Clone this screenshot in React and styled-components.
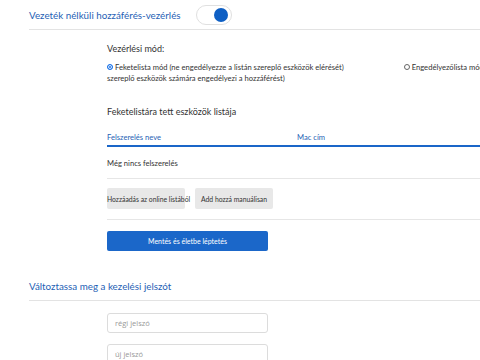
import React from 'react'
import styled, { createGlobalStyle } from 'styled-components'

const GlobalStyle = createGlobalStyle`
  body {
    margin: 0;
    background: #fff;
    overflow: hidden;
    font-family: Lato, "Noto Sans", sans-serif;
  }
`

const Page = styled.div`
  width: 640px;
  padding-left: 29px;
`

const SectionHead = styled.div`
  display: flex;
  align-items: center;
  gap: 15px;
  height: 29px;
  border-bottom: 1px solid #e3e3e3;
`

const Title = styled.h2`
  margin: 0;
  font-family: Lato, "Open Sans", sans-serif;
  font-size: 9.8px;
  font-weight: 400;
  color: #1f5fb5;
  letter-spacing: 0;
`

const Toggle = styled.div`
  position: relative;
  width: 34px;
  height: 18px;
  border: 1px solid #e0e0e0;
  border-radius: 10px;
  background: #fff;
  &::after {
    content: '';
    position: absolute;
    right: 3px;
    top: 2px;
    width: 14px;
    height: 14px;
    border-radius: 50%;
    background: #0e5fc4;
  }
`

const Body = styled.div`
  padding-left: 78px;
  padding-top: 13px;
`

const Label = styled.div`
  font-size: 9px;
  color: #333;
  line-height: 12px;
`

const Modes = styled.div`
  width: 440px;
  margin-top: 7px;
  font-size: 7.6px;
  line-height: 11px;
  color: #333;
`

const Radio = styled.span`
  display: inline-block;
  box-sizing: border-box;
  width: 6px;
  height: 6px;
  margin-right: 2px;
  border-radius: 50%;
  border: 1px solid ${p => (p.$on ? '#1a73e8' : '#666')};
  background: ${p => (p.$on ? '#1a73e8' : '#fff')};
  box-shadow: ${p => (p.$on ? 'inset 0 0 0 1px #fff' : 'none')};
  vertical-align: 0;
`

const Option = styled.span`
  margin-right: ${p => p.$gap || 0}px;
`

const ListTitle = styled(Label)`
  margin-top: 22px;
`

const TableHead = styled.div`
  display: grid;
  grid-template-columns: 190px 1fr;
  margin-top: 14px;
  padding-bottom: 2px;
  border-bottom: 2px solid #1a66c8;
  font-size: 7.6px;
  line-height: 11px;
  color: #1f5fb5;
`

const EmptyRow = styled.div`
  padding: 11px 0 9px;
  font-size: 7.6px;
  line-height: 11px;
  color: #333;
  border-bottom: 1px solid #e6e6e6;
`

const ButtonRow = styled.div`
  display: flex;
  gap: 10px;
  padding: 9px 0 10px;
  border-bottom: 1px solid #e6e6e6;
`

const GreyButton = styled.button`
  width: 78px;
  height: 21px;
  padding: 0;
  border: none;
  border-radius: 2px;
  background: #e8e8e8;
  font-family: inherit;
  font-size: 6.8px;
  color: #333;
  white-space: nowrap;
`

const PrimaryButton = styled.button`
  display: block;
  width: 161px;
  height: 20px;
  margin-top: 11px;
  border: none;
  border-radius: 2px;
  background: #1b67c9;
  color: #fff;
  font-family: inherit;
  font-size: 7px;
`

const SecondHead = styled(SectionHead)`
  margin-top: 20px;
`

const Fields = styled.div`
  display: flex;
  flex-direction: column;
  gap: 11px;
  padding: 12px 0 0 78px;
`

const Input = styled.input`
  box-sizing: border-box;
  width: 161px;
  height: 20px;
  padding: 0 7px;
  border: 1px solid #dcdcdc;
  border-radius: 3px;
  font-family: "Open Sans", sans-serif;
  font-size: 7.5px;
  color: #333;
  &::placeholder {
    color: #999;
  }
`

export default function App() {
  return (
    <>
      <GlobalStyle />
      <Page>
        <SectionHead>
          <Title>Vezeték nélküli hozzáférés-vezérlés</Title>
          <Toggle />
        </SectionHead>
        <Body>
          <Label>Vezérlési mód:</Label>
          <Modes>
            <Option $gap={60}>
              <Radio $on />
              Feketelista mód (ne engedélyezze a listán szereplő eszközök elérését)
            </Option>
            <Option>
              <Radio />
              Engedélyezőlista mód (csak a listán szereplő eszközök számára engedélyezi a hozzáférést)
            </Option>
          </Modes>
          <ListTitle>Feketelistára tett eszközök listája</ListTitle>
          <TableHead>
            <span>Felszerelés neve</span>
            <span>Mac cím</span>
          </TableHead>
          <EmptyRow>Még nincs felszerelés</EmptyRow>
          <ButtonRow>
            <GreyButton>Hozzáadás az online listából</GreyButton>
            <GreyButton>Add hozzá manuálisan</GreyButton>
          </ButtonRow>
          <PrimaryButton>Mentés és életbe léptetés</PrimaryButton>
        </Body>
        <SecondHead>
          <Title>Változtassa meg a kezelési jelszót</Title>
        </SecondHead>
        <Fields>
          <Input placeholder="régi jelszó" />
          <Input placeholder="új jelszó" />
        </Fields>
      </Page>
    </>
  )
}
